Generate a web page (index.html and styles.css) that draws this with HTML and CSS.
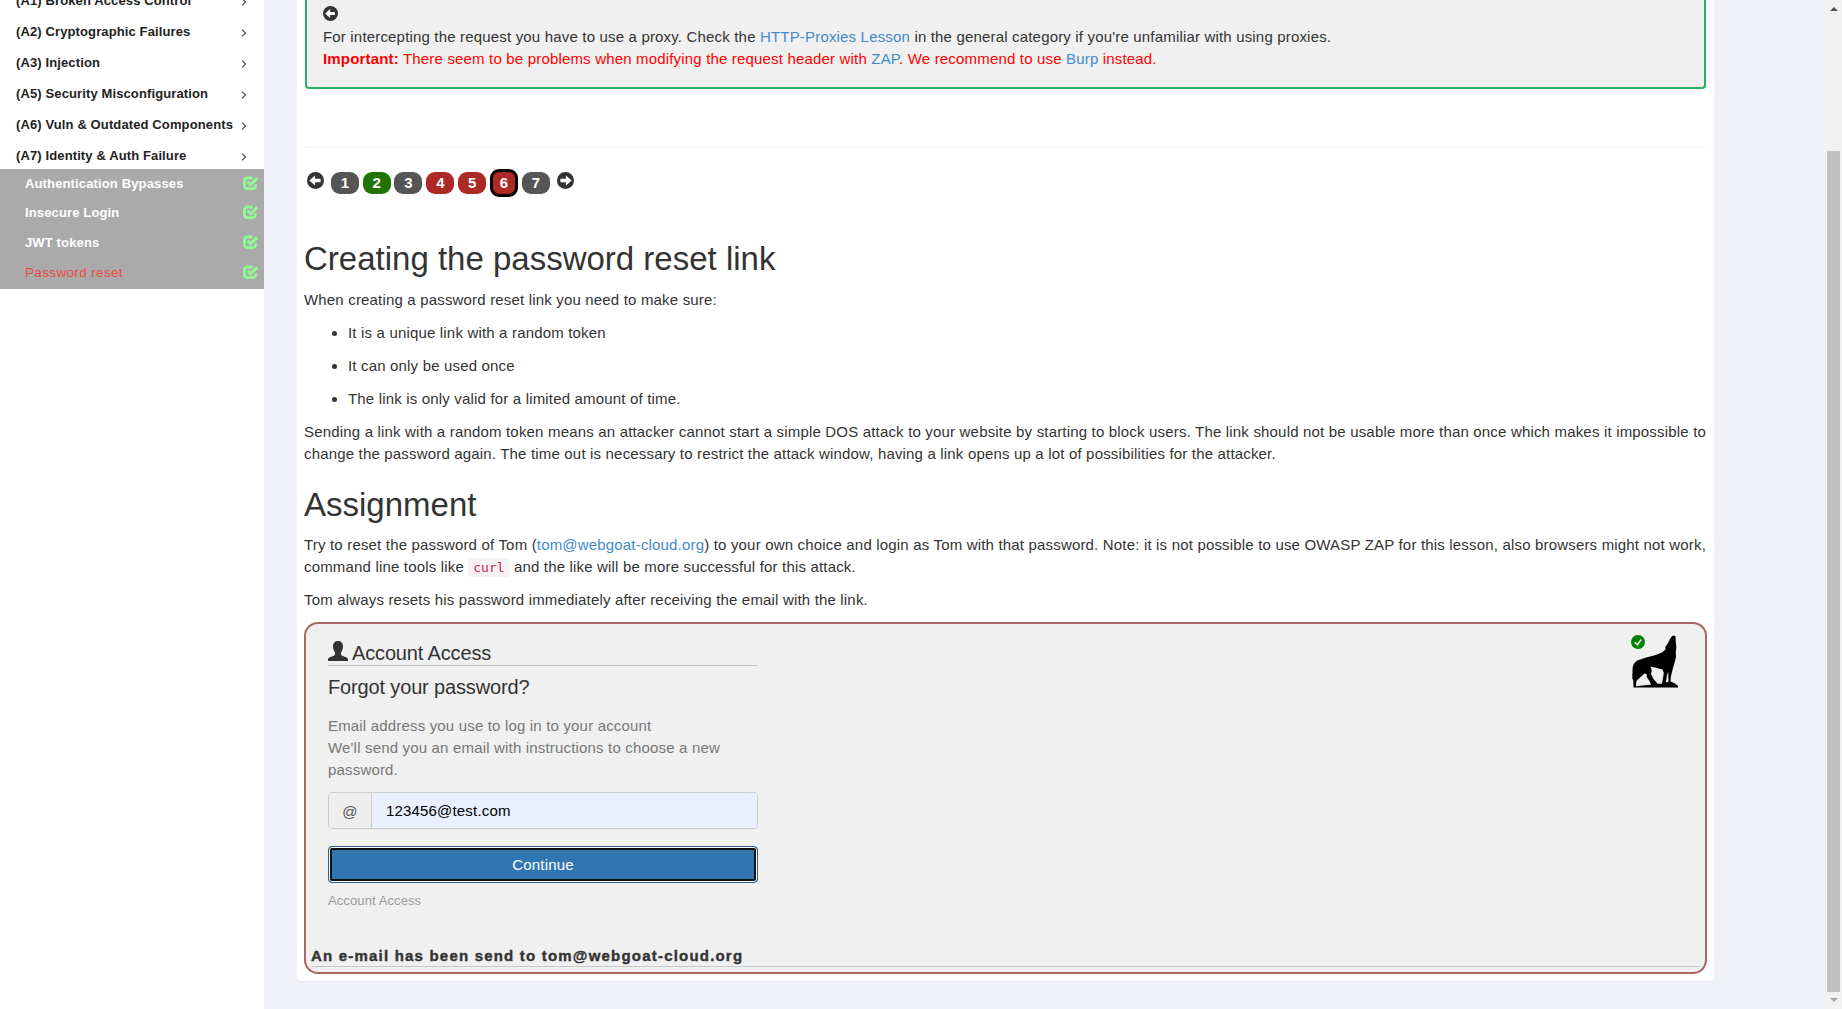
FILE: index.html
```html
<!DOCTYPE html>
<html lang="en">
<head>
<meta charset="utf-8">
<title>WebGoat</title>
<link rel="stylesheet" href="styles.css">
</head>
<body>
<svg class="defs" width="0" height="0">
  <symbol id="chevron" viewBox="0 0 6 8"><path d="M1 .7 4.6 4 1 7.3" fill="none" stroke="#444" stroke-width="1.1"/></symbol>
  <symbol id="check" viewBox="0 0 15 15"><path d="M9.600 2H4.400A2.700 2.700 0 0 0 1.500 4.700v5.100a2.900 2.900 0 0 0 2.900 2.900h5.200a2.900 2.900 0 0 0 2.900-2.900V8.200" fill="none" stroke="#90fb90" stroke-width="2.800"/><path d="M4.600 5.800 7.600 8.700l6.600-6.300" fill="none" stroke="#90fb90" stroke-width="2.900"/></symbol>
  <symbol id="arrow-left" viewBox="0 0 16 16"><circle cx="8" cy="8" r="8" fill="#333"/><path d="M2.2 8 7.6 3.2V6.4H12.8V9.6H7.6V12.8Z" fill="#fff"/></symbol>
  <symbol id="arrow-right" viewBox="0 0 16 16"><circle cx="8" cy="8" r="8" fill="#333"/><path d="M13.8 8 8.4 3.2V6.4H3.2V9.6H8.4V12.8Z" fill="#fff"/></symbol>
</svg>
<div class="page">
  <aside class="sidebar">
    <nav class="menu">
      <a class="category"><span>(A1) Broken Access Control</span><svg class="chevron"><use href="#chevron"/></svg></a>
      <a class="category"><span>(A2) Cryptographic Failures</span><svg class="chevron"><use href="#chevron"/></svg></a>
      <a class="category"><span>(A3) Injection</span><svg class="chevron"><use href="#chevron"/></svg></a>
      <a class="category"><span>(A5) Security Misconfiguration</span><svg class="chevron"><use href="#chevron"/></svg></a>
      <a class="category"><span>(A6) Vuln &amp; Outdated Components</span><svg class="chevron"><use href="#chevron"/></svg></a>
      <a class="category"><span>(A7) Identity &amp; Auth Failure</span><svg class="chevron"><use href="#chevron"/></svg></a>
      <div class="lessons">
        <a class="lesson"><span>Authentication Bypasses</span><svg class="check"><use href="#check"/></svg></a>
        <a class="lesson"><span>Insecure Login</span><svg class="check"><use href="#check"/></svg></a>
        <a class="lesson"><span>JWT tokens</span><svg class="check"><use href="#check"/></svg></a>
        <a class="lesson selected"><span>Password reset</span><svg class="check"><use href="#check"/></svg></a>
      </div>
    </nav>
  </aside>
  <main class="content">
    <div class="panel">
      <section class="hint">
        <svg class="hint-prev"><use href="#arrow-left"/></svg>
        <p>For intercepting the request you have to use a proxy. Check the <a>HTTP-Proxies Lesson</a> in the general category if you're unfamiliar with using proxies.</p>
        <p class="warning"><b>Important:</b> There seem to be problems when modifying the request header with <a>ZAP</a>. We recommend to use <a>Burp</a> instead.</p>
      </section>
      <div class="divider"></div>
      <div class="pager">
        <svg class="pager-arrow"><use href="#arrow-left"/></svg>
        <a class="num">1</a><a class="num solved">2</a><a class="num">3</a><a class="num failed">4</a><a class="num failed">5</a><a class="num failed current">6</a><a class="num">7</a>
        <svg class="pager-arrow"><use href="#arrow-right"/></svg>
      </div>
      <article class="lesson-text">
        <h1>Creating the password reset link</h1>
        <p>When creating a password reset link you need to make sure:</p>
        <ul>
          <li>It is a unique link with a random token</li>
          <li>It can only be used once</li>
          <li>The link is only valid for a limited amount of time.</li>
        </ul>
        <p>Sending a link with a random token means an attacker cannot start a simple DOS attack to your website by starting to block users. The link should not be usable more than once which makes it impossible to change the password again. The time out is necessary to restrict the attack window, having a link opens up a lot of possibilities for the attacker.</p>
        <h1 class="second">Assignment</h1>
        <p>Try to reset the password of Tom (<a>tom@webgoat-cloud.org</a>) to your own choice and login as Tom with that password. Note: it is not possible to use OWASP ZAP for this lesson, also browsers might not work, command line tools like <code>curl</code> and the like will be more successful for this attack.</p>
        <p>Tom always resets his password immediately after receiving the email with the link.</p>
      </article>
      <section class="attack">
        <div class="attack-top">
          <form class="account">
            <h4 class="account-title"><svg class="user" viewBox="0 0 20 20"><path d="M10 0c3 0 5 2 5 5.200 0 2.600-.8 4.800-2 6v1.900c0 .8.5 1.200 1.300 1.600l3.900 1.600c1.200.5 1.800 1.200 1.800 2.400V20H0v-1.300c0-1.200.6-1.900 1.800-2.400l3.900-1.600C6.500 14.300 7 13.900 7 13.100v-1.900C5.800 10 5 7.800 5 5.200 5 2 7 0 10 0Z" fill="#333"/></svg>Account Access</h4>
            <h4 class="question">Forgot your password?</h4>
            <p class="help">Email address you use to log in to your account<br>We'll send you an email with instructions to choose a new password.</p>
            <div class="input-group"><span class="addon">@</span><div class="email">123456@test.com</div></div>
            <button class="continue" type="button">Continue</button>
            <small class="caption">Account Access</small>
          </form>
          <svg class="wolf" viewBox="0 0 48 53">
            <path d="M43 0.500 44.500 1.500 44.800 7 45.300 12 44.800 17 45 22 43.500 28 42 33 41 37 39.800 42 39.500 46.500 44 48.500 47 51 47 52.500H2.500L2.300 46 1.300 43 1.600 33C2 29 4 26.500 7 25.200L15 22.600 24 20.300 31 17.500 34.500 14.500 34.300 12 37 8 39 4 41 1ZM19.500 31.500 20.700 35 20 39 22.500 44 26.500 48.800H31L32 43 32.800 38 31.500 34.500 26 33ZM13.500 38.500 8.500 43 5.300 46 5 51.200 11 50.600 20 49.800 18.500 46 16 42.500 15.500 39ZM37.300 36.500 35.800 41 35 47.500 37.600 46.800 37.300 42Z" fill="#000" fill-rule="evenodd"/>
            <circle cx="7" cy="7" r="7" fill="#008000"/><path d="M3.800 7.300 6.300 9.800 10.300 4.500" fill="none" stroke="#eee" stroke-width="1.500"/>
          </svg>
        </div>
        <div class="feedback">An e-mail has been send to tom@webgoat-cloud.org</div>
      </section>
    </div>
  </main>
  <div class="scrollbar">
    <i class="up"></i><i class="thumb"></i><i class="down"></i>
  </div>
</div>
</body>
</html>
```
FILE: styles.css
```css
* { box-sizing: border-box; }
body { margin: 0; background: #f0f1f7; color: #333; font: 15px/22px "Liberation Sans", Arial, sans-serif; letter-spacing: 0.175px; overflow: hidden; }
h1, h4, p, ul { margin: 0; font-weight: normal; }
a { color: #428bca; text-decoration: none; }
svg { display: block; flex: none; }
.defs { position: absolute; }
.page { display: flex; height: 1009px; overflow: hidden; }

.sidebar { width: 264px; flex: none; background: #fff; overflow: hidden; }
.menu { margin-top: -15px; }
.category { display: flex; align-items: center; justify-content: space-between; height: 31px; padding: 0 17px 0 16px; color: #222; font-size: 13px; font-weight: bold; letter-spacing: .12px; white-space: nowrap; }
.category:last-of-type { height: 29px; padding-top: 2px; }
.chevron { width: 6px; height: 8px; margin-top: 2px; }
.lessons { height: 120px; background: #aaa; }
.lesson { display: flex; align-items: center; justify-content: space-between; height: 29.67px; padding: 0 6px 0 25px; color: #fff; font-size: 13px; font-weight: bold; letter-spacing: .14px; }
.lesson.selected { color: #e74c3c; font-weight: normal; font-size: 13.5px; letter-spacing: .35px; }
.check { width: 15px; height: 15px; margin-top: -1px; }

.content { flex: 1; padding: 0 111px 0 33px; }
.panel { height: 981px; padding: 0 7px; background: #fff; border-radius: 0 0 4px 4px; box-shadow: 0 1px 1px rgba(0,0,0,.05); }
.hint { height: 89px; margin: 0 1px; padding: 6px 16px 0; border: 2px solid #27ae60; border-top: 0; border-radius: 0 0 4px 4px; background: #f0f0f0; }
.hint-prev { width: 15px; height: 15px; margin-bottom: 5px; }
.warning { color: red; }
.divider { height: 59px; border-bottom: 1px solid #f2f2f2; border-radius: 0 0 4px 4px; }
.pager { display: flex; align-items: flex-start; height: 83px; padding: 24px 0 0 3px; gap: 3.83px; }
.pager-arrow { width: 17px; height: 17px; margin-right: 3px; }
.pager-arrow:last-child { margin-left: 3px; }
.num { display: flex; align-items: center; justify-content: center; width: 28px; height: 22px; border-radius: 9px; background: #555; color: #fff; font-weight: bold; letter-spacing: 0; }
.num.solved { background: #227404; }
.num.failed { background: #ac2925; }
.num.current { height: 28px; margin-top: -3px; border: 3px solid #000; }

.lesson-text { margin-right: 1px; text-align: justify; }
.lesson-text h1 { height: 58px; padding-top: 10px; font-size: 33px; line-height: 36px; letter-spacing: 0; }
.lesson-text .second { padding-top: 11px; }
.lesson-text p, .lesson-text li { margin-bottom: 11px; }
.lesson-text ul { padding-left: 44px; }
code { padding: 2px 5px; border-radius: 4px; background: #f9f2f4; color: #c7254e; font: 13px "DejaVu Sans Mono", monospace; letter-spacing: 0; }

.attack { display: flex; flex-direction: column; justify-content: space-between; height: 352px; padding: 0 5px 5px; border: 2px solid #a66; border-radius: 14px; background: #f0f0f0; }
.attack-top { display: flex; justify-content: space-between; padding: 11px 21px 0 17px; }
.account { width: 430px; display: flex; flex-direction: column; }
.account-title, .question { font-size: 20px; line-height: 24px; letter-spacing: -.15px; }
.account-title { display: flex; align-items: flex-end; gap: 4px; height: 31px; border-bottom: 1px solid #c5c5c5; }
.user { width: 20px; height: 20px; margin-bottom: 4px; }
.question { margin-top: 9px; }
.help { margin-top: 16px; color: #777; }
.input-group { display: flex; height: 37px; margin-top: 11px; border: 1px solid #ccc; border-radius: 4px; overflow: hidden; }
.addon { width: 43px; border-right: 1px solid #ccc; background: #eee; color: #555; text-align: center; line-height: 37px; }
.email { flex: 1; padding-left: 14px; background: #e8f0fe; color: #000; line-height: 36px; }
.continue { height: 37px; margin-top: 17px; border: 1px solid #286090; border-radius: 4px; background: #3276b1; box-shadow: inset 0 0 0 1px #fff, inset 0 0 0 3px #101010; color: #fff; font: inherit; letter-spacing: .175px; }
.caption { margin-top: 8px; color: #999; font-size: 13px; line-height: 20px; letter-spacing: .1px; }
.wolf { width: 48px; height: 53px; }
.feedback { height: 22px; border-bottom: 1px solid #c8c8c8; font-weight: bold; letter-spacing: 1.2px; line-height: 22px; -webkit-text-stroke: .4px #333; }

.scrollbar { width: 17px; background: #f1f1f1; display: flex; flex-direction: column; align-items: center; }
.up { margin-top: 7px; border: 4px solid transparent; border-top: 0; border-bottom-color: #505050; }
.thumb { width: 13px; height: 841px; margin-top: 140px; background: #c1c1c1; }
.down { margin-top: 6px; border: 4px solid transparent; border-bottom: 0; border-top-color: #a3a3a3; }
```
